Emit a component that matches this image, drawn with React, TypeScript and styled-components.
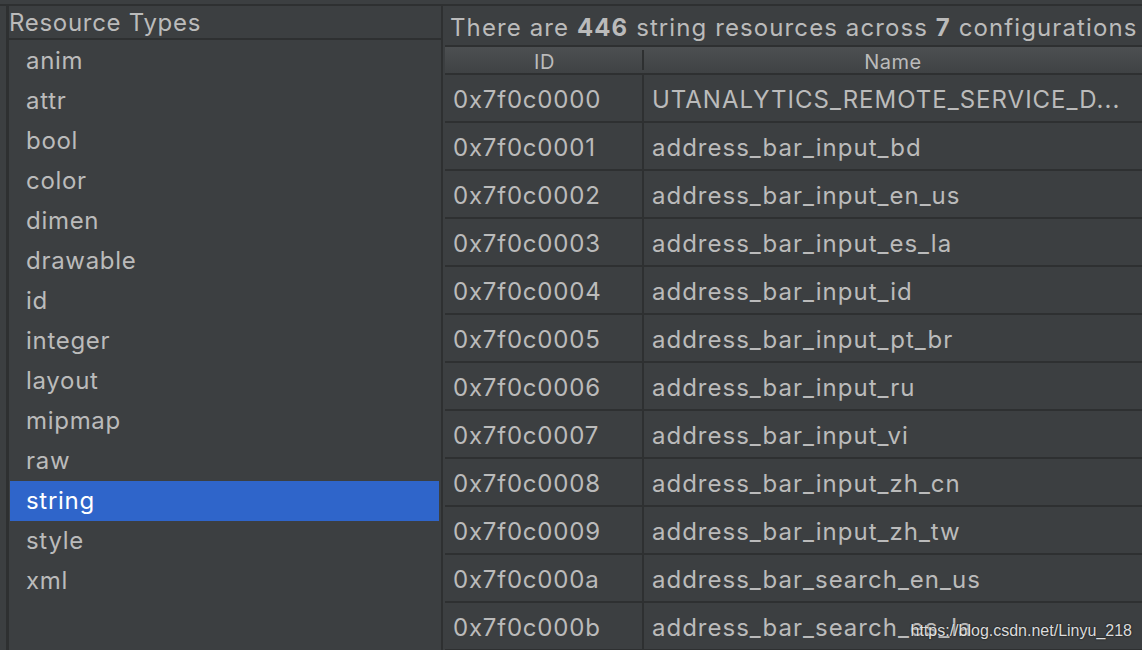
import React from 'react';
import styled, { createGlobalStyle } from 'styled-components';

const GlobalStyle = createGlobalStyle`
    html, body {
        margin: 0;
        padding: 0;
        background: #3c3f41;
        overflow: hidden;
    }
    body {
        font-family: Inter, "Liberation Sans", sans-serif;
        color: #bbbbbb;
    }
`;

const Window = styled.div`
    position: relative;
    width: 1142px;
    height: 650px;
    overflow: hidden;
    background: #3c3f41;
    padding-top: 4px;
    box-sizing: border-box;
`;

const Split = styled.div`
    display: flex;
    height: 100%;
    border-top: 2px solid #2e3031;
    padding-left: 6px;
`;

const LeftPanel = styled.div`
    width: 432px;
    flex-shrink: 0;
    display: flex;
    flex-direction: column;
    border-left: 3px solid #2e3031;
    border-right: 2px solid #2e3031;
`;

const PanelHeader = styled.div`
    height: 32px;
    line-height: 34px;
    font-size: 24px;
    letter-spacing: 0.7px;
    border-bottom: 2px solid #2e3031;
    white-space: nowrap;
    overflow: hidden;
`;

const TypeList = styled.ul`
    list-style: none;
    margin: 0;
    padding: 1px 2px 0 1px;
    flex: 1;
`;

const TypeItem = styled.li<{ $selected?: boolean }>`
    height: 40px;
    line-height: 40px;
    padding-left: 16px;
    font-size: 24px;
    letter-spacing: 0.7px;
    background: ${(p) => (p.$selected ? '#2f65ca' : 'transparent')};
    color: ${(p) => (p.$selected ? '#ffffff' : '#bbbbbb')};
`;

const RightPanel = styled.div`
    flex: 1;
    min-width: 0;
    display: flex;
    flex-direction: column;
`;

const Summary = styled(PanelHeader)`
    height: 39px;
    line-height: 43px;
    padding-left: 7px;
    letter-spacing: 1.1px;
    border-bottom: none;
    b {
        font-weight: 700;
    }
`;

const Table = styled.div`
    margin-left: 2px;
    display: flex;
    flex-direction: column;
`;

const HeaderRow = styled.div`
    display: grid;
    grid-template-columns: 199px 1fr;
    height: 26px;
    background: linear-gradient(#4c4f51, #3f4244);
    border-top: 2px solid #2e3031;
    border-bottom: 2px solid #2e3031;
`;

const HeaderCell = styled.div<{ $divider?: boolean }>`
    position: relative;
    font-size: 20px;
    line-height: 30px;
    letter-spacing: 0.5px;
    text-align: center;
    overflow: hidden;
    ${(p) =>
        p.$divider &&
        `
        &::after {
            content: '';
            position: absolute;
            right: 0;
            top: 3px;
            bottom: 3px;
            width: 2px;
            background: #2e3031;
        }
    `}
`;

const Row = styled.div`
    display: grid;
    grid-template-columns: 199px 1fr;
    height: 46px;
    border-bottom: 2px solid #2e3031;
`;

const Cell = styled.div<{ $first?: boolean }>`
    font-size: 24px;
    line-height: 49px;
    letter-spacing: ${(p) => (p.$first ? '0.8px' : '1px')};
    padding-left: 8px;
    border-right: ${(p) => (p.$first ? '2px solid #2e3031' : 'none')};
    white-space: nowrap;
    overflow: hidden;
`;

const Watermark = styled.div`
    position: absolute;
    right: 10px;
    bottom: 10px;
    font-family: "Liberation Sans", Arial, sans-serif;
    font-size: 16px;
    color: rgba(255, 255, 255, 0.85);
    text-shadow: 0 0 2px rgba(0, 0, 0, 0.8);
`;

const types = ['anim', 'attr', 'bool', 'color', 'dimen', 'drawable', 'id', 'integer', 'layout', 'mipmap', 'raw', 'string', 'style', 'xml'];

const rows = [
    ['0x7f0c0000', 'UTANALYTICS_REMOTE_SERVICE_D...'],
    ['0x7f0c0001', 'address_bar_input_bd'],
    ['0x7f0c0002', 'address_bar_input_en_us'],
    ['0x7f0c0003', 'address_bar_input_es_la'],
    ['0x7f0c0004', 'address_bar_input_id'],
    ['0x7f0c0005', 'address_bar_input_pt_br'],
    ['0x7f0c0006', 'address_bar_input_ru'],
    ['0x7f0c0007', 'address_bar_input_vi'],
    ['0x7f0c0008', 'address_bar_input_zh_cn'],
    ['0x7f0c0009', 'address_bar_input_zh_tw'],
    ['0x7f0c000a', 'address_bar_search_en_us'],
    ['0x7f0c000b', 'address_bar_search_es_la'],
];

const App = () => {
    return (
        <Window>
            <GlobalStyle />
            <Split>
                <LeftPanel>
                    <PanelHeader>Resource Types</PanelHeader>
                    <TypeList>
                        {types.map((t) => (
                            <TypeItem key={t} $selected={t === 'string'}>
                                {t}
                            </TypeItem>
                        ))}
                    </TypeList>
                </LeftPanel>
                <RightPanel>
                    <Summary>
                        There are <b>446</b> string resources across <b>7</b> configurations
                    </Summary>
                    <Table>
                        <HeaderRow>
                            <HeaderCell $divider>ID</HeaderCell>
                            <HeaderCell>Name</HeaderCell>
                        </HeaderRow>
                        {rows.map(([id, name]) => (
                            <Row key={id}>
                                <Cell $first>{id}</Cell>
                                <Cell>{name}</Cell>
                            </Row>
                        ))}
                    </Table>
                </RightPanel>
            </Split>
            <Watermark>https://blog.csdn.net/Linyu_218</Watermark>
        </Window>
    );
};

export default App;
